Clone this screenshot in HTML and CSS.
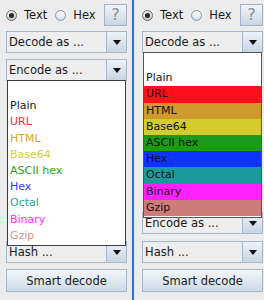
FILE: index.html
```html
<!DOCTYPE html>
<html lang="en">
<head>
  <meta charset="UTF-8" />
  <title>Decoder</title>
  <link rel="stylesheet" href="styles.css">
</head>
<body>

  <div class="panel left">
    <div class="top-row">
      <label class="radio-label"><span class="radio checked"></span>Text</label>
      <label class="radio-label"><span class="radio"></span>Hex</label>
      <button class="help-btn">?</button>
    </div>

    <div class="combo decode">
      <div class="combo-text">Decode as ...</div>
      <div class="combo-arrow"><span class="tri"></span></div>
    </div>

    <div class="combo encode">
      <div class="combo-text">Encode as ...</div>
      <div class="combo-arrow"><span class="tri"></span></div>
      <ul class="popup plain-list">
        <li>&nbsp;</li>
        <li class="c-plain">Plain</li>
        <li class="c-url">URL</li>
        <li class="c-html">HTML</li>
        <li class="c-b64">Base64</li>
        <li class="c-ascii">ASCII hex</li>
        <li class="c-hex">Hex</li>
        <li class="c-octal">Octal</li>
        <li class="c-binary">Binary</li>
        <li class="c-gzip">Gzip</li>
      </ul>
    </div>

    <div class="combo hash push">
      <div class="combo-text">Hash ...</div>
      <div class="combo-arrow"><span class="tri"></span></div>
    </div>

    <button class="smart-btn">Smart decode</button>
  </div>

  <div class="divider"></div>

  <div class="panel right">
    <div class="top-row">
      <label class="radio-label"><span class="radio checked"></span>Text</label>
      <label class="radio-label"><span class="radio"></span>Hex</label>
      <button class="help-btn">?</button>
    </div>

    <div class="combo decode">
      <div class="combo-text">Decode as ...</div>
      <div class="combo-arrow"><span class="tri"></span></div>
      <ul class="popup color-list">
        <li>&nbsp;</li>
        <li class="bg-plain">Plain</li>
        <li class="bg-url">URL</li>
        <li class="bg-html">HTML</li>
        <li class="bg-b64">Base64</li>
        <li class="bg-ascii">ASCII hex</li>
        <li class="bg-hex">Hex</li>
        <li class="bg-octal">Octal</li>
        <li class="bg-binary">Binary</li>
        <li class="bg-gzip">Gzip</li>
      </ul>
    </div>

    <div class="combo encode push">
      <div class="combo-text">Encode as ...</div>
      <div class="combo-arrow"><span class="tri"></span></div>
    </div>

    <div class="combo hash">
      <div class="combo-text">Hash ...</div>
      <div class="combo-arrow"><span class="tri"></span></div>
    </div>

    <button class="smart-btn">Smart decode</button>
  </div>

</body>
</html>
```

FILE: styles.css
```css
body {
  margin: 0;
  width: 264px;
  height: 300px;
  display: flex;
  background-color: #ececec;
  font-family: "DejaVu Sans", sans-serif;
  font-size: 11.5px;
  color: #1a1a1a;
  overflow: hidden;
}

.panel {
  display: flex;
  flex-direction: column;
  box-sizing: border-box;
  height: 300px;
  padding: 4px 0 8px;
}

.panel.left {
  width: 132px;
  padding-left: 6px;
  padding-right: 5px;
}

.panel.right {
  width: 130px;
  padding-left: 8px;
  padding-right: 1px;
}

.divider {
  width: 2px;
  background-color: #2f72e4;
}

.top-row {
  display: flex;
  align-items: center;
  height: 22px;
}

.radio-label {
  display: flex;
  align-items: center;
  margin-right: 8px;
}

.radio {
  width: 9px;
  height: 9px;
  border-radius: 50%;
  border: 1px solid #8a97a6;
  background: linear-gradient(#ffffff, #d6dde6);
  margin-right: 7px;
  position: relative;
}

.radio.checked {
  border-color: #6a6a6a;
  background: linear-gradient(#f4f4f4, #c8c8c8);
}

.radio.checked::after {
  content: "";
  position: absolute;
  left: 2px;
  top: 2px;
  width: 5px;
  height: 5px;
  border-radius: 50%;
  background-color: #2a2a2a;
}

.help-btn {
  margin-left: auto;
  width: 23px;
  height: 22px;
  padding: 0;
  border: 1px solid #a3b1c2;
  background: linear-gradient(#f2f5f9, #c9d6e4);
  color: #8a8a8a;
  font-family: "DejaVu Sans", sans-serif;
  font-size: 16px;
  line-height: 20px;
}

.combo {
  position: relative;
  display: flex;
  height: 22px;
  box-sizing: border-box;
  border: 1px solid #a6b6c9;
  background-color: #eeeeee;
}

.combo.decode {
  margin-top: 5px;
}

.combo.encode {
  margin-top: 6px;
}

.combo.hash {
  margin-top: 7px;
}

.combo.push {
  margin-top: auto;
}

.combo-text {
  flex: 1;
  padding-left: 2px;
  line-height: 20px;
  white-space: nowrap;
}

.combo-arrow {
  width: 19px;
  border-left: 1px solid #a6b6c9;
  background: linear-gradient(#eef2f7, #c8d5e3);
  display: flex;
  align-items: center;
  justify-content: center;
}

.tri {
  width: 0;
  height: 0;
  border-left: 4px solid transparent;
  border-right: 4px solid transparent;
  border-top: 5px solid #111;
}

.popup {
  position: absolute;
  top: 100%;
  left: 0;
  right: 0;
  margin: 0;
  padding: 1px 0;
  list-style: none;
  background-color: #fff;
  border: 1px solid #3c3c3c;
  font-size: 11px;
  z-index: 2;
}

.popup li {
  height: 16.2px;
  line-height: 16px;
  padding-left: 2px;
  white-space: nowrap;
}

.plain-list .c-plain { color: #1a1a1a; }
.plain-list .c-url { color: #ff2a3a; }
.plain-list .c-html { color: #d9a23c; }
.plain-list .c-b64 { color: #d2cd3a; }
.plain-list .c-ascii { color: #1fa31f; }
.plain-list .c-hex { color: #2d3dff; }
.plain-list .c-octal { color: #1ea3a3; }
.plain-list .c-binary { color: #ff2cff; }
.plain-list .c-gzip { color: #e39393; }

.color-list {
  border-color: #555;
  color: #111;
}

.color-list .bg-url { background-color: #ff0f1b; }
.color-list .bg-html { background-color: #cf9a2c; }
.color-list .bg-b64 { background-color: #d4cc2c; }
.color-list .bg-ascii { background-color: #1a9a1a; }
.color-list .bg-hex { background-color: #1034ff; }
.color-list .bg-octal { background-color: #1a9a9a; }
.color-list .bg-binary { background-color: #ff22ff; }
.color-list .bg-gzip { background-color: #cd7b7b; }

.smart-btn {
  margin-top: 6px;
  height: 23px;
  padding: 0;
  border: 1px solid #a6b6c9;
  background: linear-gradient(#f4f7fa, #cdd9e6);
  color: #1a1a1a;
  font-family: "DejaVu Sans", sans-serif;
  font-size: 11.5px;
}
```
